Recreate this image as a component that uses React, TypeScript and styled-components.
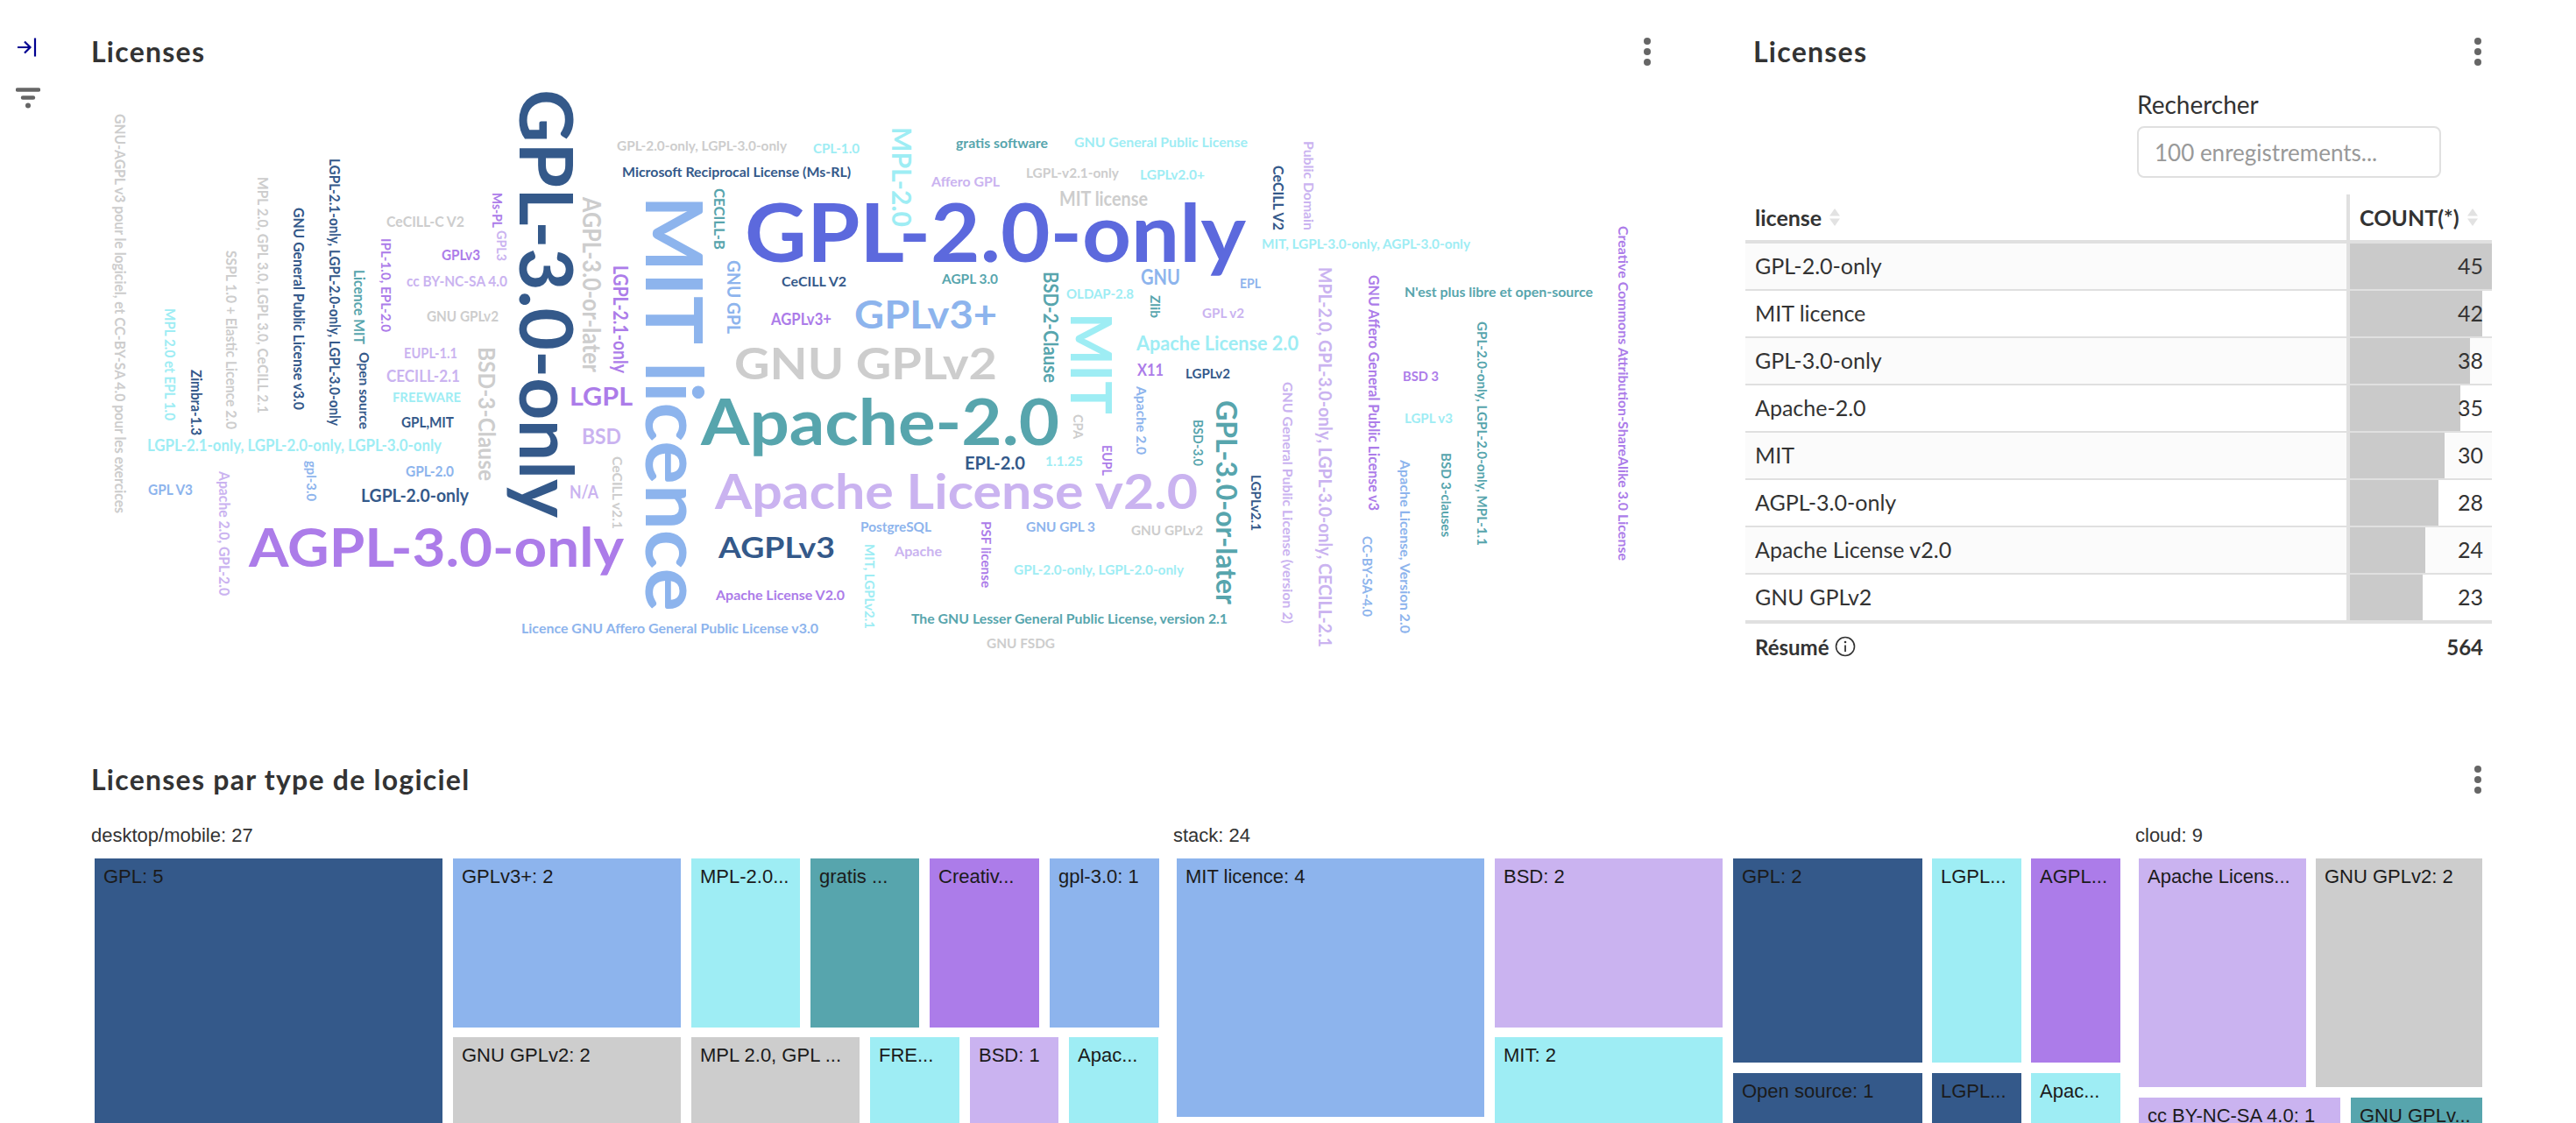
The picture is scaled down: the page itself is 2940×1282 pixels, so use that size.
import React from "react";
import styled, { createGlobalStyle } from "styled-components";

const C = {
  navy: "#34598a",
  blue: "#8db4ed",
  cyan: "#9eedf4",
  teal: "#57a5ad",
  purple: "#ac7ce9",
  lav: "#cab3f0",
  gray: "#cdcdcd",
  indigo: "#5c69dd",
};
type ColorKey = keyof typeof C;

const UI_FONT = `"Lato", "Noto Sans", sans-serif`;

const Global = createGlobalStyle`
  html, body { margin: 0; padding: 0; background: #fff; }
  body { font-family: ${UI_FONT}; color: #333; }
`;

const Page = styled.div`
  width: 2940px;
  height: 1282px;
  display: flex;
  overflow: hidden;
  background: #fff;
`;
const Rail = styled.aside`
  width: 106px;
  flex: none;
  display: flex;
  flex-direction: column;
  align-items: flex-start;
  padding: 42px 0 0 18px;
  gap: 34px;
  box-sizing: border-box;
`;
const Main = styled.main`
  width: 2738px;
  flex: none;
  display: flex;
  flex-direction: column;
`;
const TopRow = styled.div`
  height: 861px;
  flex: none;
  padding-top: 30px;
  box-sizing: border-box;
  display: flex;
`;
const Panel = styled.section<{ $w: number }>`
  width: ${(p) => p.$w}px;
  flex: none;
  display: flex;
  flex-direction: column;
`;
const Header = styled.header<{ $pl?: number; $pr: number }>`
  height: 58px;
  flex: none;
  display: flex;
  align-items: center;
  justify-content: space-between;
  padding: 0 ${(p) => p.$pr}px 0 ${(p) => p.$pl ?? 0}px;
`;
const Title = styled.h2`
  margin: 0 0 2px -2px;
  font-size: 32px;
  font-weight: 700;
  color: #333;
  letter-spacing: 1.25px;
`;
const CloudSvg = styled.svg`
  display: block;
  width: 1886px;
  height: 670px;
  margin-top: 12px;
`;
const Word = styled.text`
  font-family: ${UI_FONT};
  font-weight: 700;
`;

const SearchRow = styled.div`
  display: flex;
  justify-content: flex-end;
  padding-right: 58px;
  margin-top: 14px;
`;
const SearchBox = styled.label`
  width: 347px;
  display: flex;
  flex-direction: column;
  gap: 8px;
`;
const SearchLabel = styled.span`
  font-size: 28px;
  line-height: 34px;
  color: #333;
`;
const SearchInput = styled.input`
  height: 59px;
  box-sizing: border-box;
  border: 2px solid #e0e0e0;
  border-radius: 8px;
  padding: 0 18px;
  font-family: ${UI_FONT};
  font-size: 26px;
  outline: none;
  &::placeholder { color: #999; opacity: 1; }
`;

const Table = styled.div`
  margin-top: 19px;
  width: 852px;
  display: flex;
  flex-direction: column;
`;
const HeadRow = styled.div`
  display: grid;
  grid-template-columns: 686px 166px;
  height: 56px;
  box-sizing: border-box;
  border-bottom: 4px solid #e0e0e0;
`;
const HeadCell = styled.div<{ $divider?: boolean }>`
  display: flex;
  align-items: flex-end;
  gap: 9px;
  padding: 0 0 10px 11px;
  font-size: 25px;
  font-weight: 700;
  color: #333;
  line-height: 32px;
  ${(p) => (p.$divider ? "border-left: 4px solid #e0e0e0;" : "")}
`;
const SortIcon = styled.svg`
  width: 12px;
  height: 20px;
  flex: none;
  margin-bottom: 6px;
`;
const Row = styled.div<{ $odd: boolean; $last: boolean }>`
  display: grid;
  grid-template-columns: 686px 166px;
  height: ${(p) => (p.$last ? 56 : 54)}px;
  box-sizing: border-box;
  border-bottom: ${(p) => (p.$last ? 4 : 2)}px solid #e0e0e0;
  background: ${(p) => (p.$odd ? "#fbfbfb" : "#fff")};
`;
const NameCell = styled.div`
  display: flex;
  align-items: center;
  padding: 0 0 3px 11px;
  font-size: 25px;
  color: #333;
`;
const ValueCell = styled.div`
  position: relative;
  border-left: 4px solid #e0e0e0;
  display: flex;
  align-items: center;
  justify-content: flex-end;
  padding: 0 10px 3px 0;
  font-size: 25px;
  color: #333;
`;
const Bar = styled.div`
  position: absolute;
  left: 0;
  top: 0;
  bottom: 0;
  background: #cacaca;
`;
const ValueText = styled.span`
  position: relative;
`;
const FootRow = styled.div`
  display: flex;
  align-items: center;
  justify-content: space-between;
  height: 52px;
  padding: 0 10px 0 11px;
  font-size: 24px;
  font-weight: 700;
  color: #333;
`;
const FootLabel = styled.span`
  display: flex;
  align-items: center;
  gap: 7px;
`;

const BottomPanel = styled.section`
  display: flex;
  flex-direction: column;
  flex: none;
`;
const Groups = styled.div`
  display: flex;
  gap: 20px;
  margin: 19px 0 0 2px;
`;
const Group = styled.div<{ $w: number }>`
  width: ${(p) => p.$w}px;
  flex: none;
  display: flex;
  flex-direction: column;
  gap: 10px;
`;
const Caption = styled.div`
  margin-left: -4px;
  font-family: "Liberation Sans", Arial, sans-serif;
  font-size: 22px;
  line-height: 32px;
  color: #333;
`;
const Cluster = styled.div<{ $col?: boolean; $gap?: number }>`
  display: flex;
  flex-direction: ${(p) => (p.$col ? "column" : "row")};
  gap: ${(p) => p.$gap ?? 12}px;
  align-items: flex-start;
`;
const Tile = styled.div<{ $w: number; $h: number; $c: ColorKey }>`
  width: ${(p) => p.$w}px;
  height: ${(p) => p.$h}px;
  flex: none;
  background: ${(p) => C[p.$c]};
  box-sizing: border-box;
  padding: 8px 8px 0 10px;
  font-family: "Liberation Sans", Arial, sans-serif;
  font-size: 22px;
  line-height: 26px;
  color: #1b1b1b;
  white-space: nowrap;
  overflow: hidden;
`;

type HW = [string, number, number, number, number, ColorKey];

const horizontal: HW[] = [
  ["CeCILL-C V2", 441, 530, 259, 17, "gray"],
  ["GPLv3", 504, 548, 297, 17, "purple"],
  ["cc BY-NC-SA 4.0", 464, 579, 327, 17, "lav"],
  ["GNU GPLv2", 487, 569, 367, 17, "gray"],
  ["EUPL-1.1", 461, 522, 409, 17, "lav"],
  ["CECILL-2.1", 441, 525, 436, 18, "lav"],
  ["FREEWARE", 448, 526, 459, 16, "cyan"],
  ["GPL,MIT", 458, 518, 488, 17, "navy"],
  ["LGPL-2.1-only, LGPL-2.0-only, LGPL-3.0-only", 168, 504, 515, 18, "cyan"],
  ["GPL-2.0", 463, 518, 544, 17, "blue"],
  ["GPL V3", 169, 220, 565, 17, "blue"],
  ["LGPL-2.0-only", 412, 535, 573, 21, "navy"],
  ["AGPL-3.0-only", 284, 712, 647, 62, "purple"],
  ["LGPL", 650, 722, 463, 29, "purple"],
  ["BSD", 664, 709, 507, 24, "lav"],
  ["N/A", 650, 683, 569, 20, "lav"],
  ["GPL-2.0-only, LGPL-3.0-only", 704, 898, 172, 16, "gray"],
  ["CPL-1.0", 928, 981, 175, 16, "cyan"],
  ["gratis software", 1091, 1196, 169, 16, "teal"],
  ["GNU General Public License", 1226, 1424, 168, 16, "cyan"],
  ["Microsoft Reciprocal License (Ms-RL)", 710, 971, 202, 16, "navy"],
  ["Affero GPL", 1063, 1141, 213, 16, "lav"],
  ["LGPL-v2.1-only", 1171, 1277, 203, 16, "gray"],
  ["LGPLv2.0+", 1301, 1375, 205, 16, "cyan"],
  ["MIT license", 1209, 1310, 235, 22, "gray"],
  ["GPL-2.0-only", 850, 1422, 299, 91, "indigo"],
  ["CeCILL V2", 892, 966, 327, 16, "navy"],
  ["AGPL 3.0", 1075, 1139, 324, 16, "teal"],
  ["GNU", 1302, 1347, 325, 24, "blue"],
  ["OLDAP-2.8", 1217, 1294, 341, 16, "cyan"],
  ["AGPLv3+", 880, 949, 371, 18, "purple"],
  ["GPLv3+", 975, 1138, 375, 44, "blue"],
  ["GNU GPLv2", 838, 1138, 433, 50, "gray"],
  ["Apache License 2.0", 1297, 1482, 400, 23, "cyan"],
  ["X11", 1298, 1328, 429, 18, "purple"],
  ["LGPLv2", 1353, 1404, 432, 16, "navy"],
  ["EPL", 1415, 1439, 329, 15, "blue"],
  ["GPL v2", 1372, 1420, 363, 15, "lav"],
  ["MIT, LGPL-3.0-only, AGPL-3.0-only", 1440, 1678, 284, 16, "cyan"],
  ["N'est plus libre et open-source", 1603, 1818, 339, 16, "teal"],
  ["BSD 3", 1601, 1642, 435, 15, "purple"],
  ["LGPL v3", 1603, 1658, 483, 15, "cyan"],
  ["Apache-2.0", 800, 1209, 508, 73, "teal"],
  ["EPL-2.0", 1101, 1170, 536, 20, "navy"],
  ["1.1.25", 1193, 1236, 532, 16, "cyan"],
  ["Apache License v2.0", 816, 1367, 581, 55, "lav"],
  ["PostgreSQL", 982, 1063, 607, 16, "blue"],
  ["GNU GPL 3", 1171, 1250, 607, 16, "blue"],
  ["GNU GPLv2", 1291, 1373, 611, 16, "gray"],
  ["AGPLv3", 820, 953, 637, 33, "navy"],
  ["Apache", 1021, 1075, 635, 16, "lav"],
  ["GPL-2.0-only, LGPL-2.0-only", 1157, 1351, 656, 16, "cyan"],
  ["Apache License V2.0", 817, 964, 685, 16, "purple"],
  ["Licence GNU Affero General Public License v3.0", 595, 934, 723, 16, "blue"],
  ["The GNU Lesser General Public License, version 2.1", 1040, 1401, 712, 16, "teal"],
  ["GNU FSDG", 1126, 1204, 740, 16, "gray"],
];

const vertical: HW[] = [
  ["GNU-AGPL v3 pour le logiciel, et CC-BY-SA 4.0 pour les exercices", 130, 586, 131, 17, "gray"],
  ["MPL 2.0 et EPL 1.0", 352, 480, 188, 17, "cyan"],
  ["Zimbra-1.3", 422, 497, 218, 17, "navy"],
  ["SSPL 1.0 + Elastic Licence 2.0", 286, 490, 258, 17, "gray"],
  ["MPL 2.0, GPL 3.0, LGPL 3.0, CeCILL 2.1", 202, 472, 294, 17, "gray"],
  ["GNU General Public License v3.0", 237, 468, 335, 17, "navy"],
  ["LGPL-2.1-only, LGPL-2.0-only, LGPL-3.0-only", 181, 486, 376, 17, "navy"],
  ["Licence MIT", 308, 393, 404, 17, "teal"],
  ["Open source", 402, 490, 410, 16, "navy"],
  ["IPL-1.0, EPL-2.0", 272, 379, 435, 16, "purple"],
  ["Ms-PL", 220, 260, 562, 16, "purple"],
  ["GPL3", 263, 298, 567, 16, "lav"],
  ["GPL-3.0-only", 102, 591, 593, 84, "navy"],
  ["AGPL-3.0-or-later", 225, 425, 665, 28, "gray"],
  ["BSD-3-Clause", 396, 549, 546, 26, "gray"],
  ["LGPL-2.1-only", 303, 426, 700, 22, "purple"],
  ["MIT licence", 223, 698, 737, 90, "blue"],
  ["CECILL-B", 215, 285, 815, 17, "teal"],
  ["GNU GPL", 297, 381, 830, 20, "blue"],
  ["MPL-2.0", 145, 259, 1018, 31, "cyan"],
  ["BSD-2-Clause", 310, 437, 1191, 22, "teal"],
  ["MIT", 357, 473, 1222, 65, "cyan"],
  ["Zlib", 337, 363, 1313, 16, "teal"],
  ["CeCILL v2.1", 521, 604, 699, 16, "gray"],
  ["CPA", 473, 501, 1225, 15, "gray"],
  ["EUPL", 508, 543, 1258, 15, "purple"],
  ["Apache 2.0", 441, 519, 1297, 16, "blue"],
  ["BSD-3.0", 479, 532, 1362, 15, "teal"],
  ["MIT, LGPLv2.1", 621, 718, 987, 16, "cyan"],
  ["PSF license", 595, 671, 1120, 15, "purple"],
  ["gpl-3.0", 526, 572, 350, 16, "blue"],
  ["Apache 2.0, GPL-2.0", 538, 680, 250, 17, "lav"],
  ["CeCILL V2", 189, 263, 1453, 17, "navy"],
  ["Public Domain", 161, 263, 1488, 16, "lav"],
  ["MPL-2.0, GPL-3.0-only, LGPL-3.0-only, CECILL-2.1", 305, 739, 1505, 21, "lav"],
  ["GNU Affero General Public License v3", 314, 583, 1562, 17, "purple"],
  ["GPL-2.0-only, LGPL-2.0-only, MPL-1.1", 367, 623, 1686, 16, "teal"],
  ["Creative Commons Attribution-ShareAlike 3.0 License", 258, 640, 1847, 16, "purple"],
  ["GPL-3.0-or-later", 457, 690, 1388, 33, "teal"],
  ["LGPLv2.1", 542, 606, 1428, 16, "navy"],
  ["GNU General Public License (version 2)", 436, 712, 1464, 16, "lav"],
  ["CC-BY-SA-4.0", 612, 704, 1555, 16, "blue"],
  ["Apache License, Version 2.0", 525, 723, 1598, 16, "blue"],
  ["BSD 3-clauses", 517, 613, 1645, 16, "teal"],
];

const rows: [string, number][] = [
  ["GPL-2.0-only", 45],
  ["MIT licence", 42],
  ["GPL-3.0-only", 38],
  ["Apache-2.0", 35],
  ["MIT", 30],
  ["AGPL-3.0-only", 28],
  ["Apache License v2.0", 24],
  ["GNU GPLv2", 23],
];

const Kebab = () => (
  <svg width="10" height="32" viewBox="0 0 10 32" aria-hidden="true">
    <circle cx="5" cy="4" r="4" fill="#666" />
    <circle cx="5" cy="16" r="4" fill="#666" />
    <circle cx="5" cy="28" r="4" fill="#666" />
  </svg>
);

const Sort = () => (
  <SortIcon viewBox="0 0 12 20" aria-hidden="true">
    <path d="M6 0 L12 8.5 H0 Z" fill="#e2e2e2" />
    <path d="M6 20 L12 11.5 H0 Z" fill="#e2e2e2" />
  </SortIcon>
);

export default function App() {
  return (
    <>
      <Global />
      <Page>
        <Rail>
          <svg width="24" height="24" viewBox="0 0 24 24" aria-hidden="true">
            <path d="M2 12 H16 M10 5.5 L16.5 12 L10 18.5 M22 1.5 V22.5" fill="none" stroke="#000091" strokeWidth="2.2" />
          </svg>
          <svg width="28" height="24" viewBox="0 0 28 24" aria-hidden="true">
            <path d="M2 2.5 H26 M8 11.5 H20" stroke="#666" strokeWidth="4.4" strokeLinecap="round" />
            <circle cx="14" cy="20.5" r="3" fill="#666" />
          </svg>
        </Rail>
        <Main>
          <TopRow>
            <Panel $w={1886}>
              <Header $pr={107}>
                <Title>Licenses</Title>
                <Kebab />
              </Header>
              <CloudSvg viewBox="106 100 1886 670">
                {horizontal.map(([t, x0, x1, y, s, c], i) => (
                  <Word key={`h${i}`} x={x0} y={y} fontSize={s} fill={C[c]} textLength={x1 - x0} lengthAdjust="spacingAndGlyphs">
                    {t}
                  </Word>
                ))}
                {vertical.map(([t, y0, y1, x, s, c], i) => (
                  <Word key={`v${i}`} x={x} y={y0} fontSize={s} fill={C[c]} transform={`rotate(90 ${x} ${y0})`} textLength={y1 - y0} lengthAdjust="spacingAndGlyphs">
                    {t}
                  </Word>
                ))}
              </CloudSvg>
            </Panel>
            <Panel $w={852}>
              <Header $pl={11} $pr={11}>
                <Title>Licenses</Title>
                <Kebab />
              </Header>
              <SearchRow>
                <SearchBox>
                  <SearchLabel>Rechercher</SearchLabel>
                  <SearchInput placeholder="100 enregistrements..." />
                </SearchBox>
              </SearchRow>
              <Table>
                <HeadRow>
                  <HeadCell>license <Sort /></HeadCell>
                  <HeadCell $divider>COUNT(*) <Sort /></HeadCell>
                </HeadRow>
                {rows.map(([name, v], i) => (
                  <Row key={name} $odd={i % 2 === 0} $last={i === rows.length - 1}>
                    <NameCell>{name}</NameCell>
                    <ValueCell>
                      <Bar style={{ width: `${(v / 45) * 162}px` }} />
                      <ValueText>{v}</ValueText>
                    </ValueCell>
                  </Row>
                ))}
                <FootRow>
                  <FootLabel>
                    Résumé
                    <svg width="24" height="24" viewBox="0 0 24 24" aria-hidden="true">
                      <circle cx="12" cy="12" r="10.5" fill="none" stroke="#333" strokeWidth="1.6" />
                      <path d="M12 10.5 V18" stroke="#333" strokeWidth="1.8" />
                      <circle cx="12" cy="7" r="1.3" fill="#333" />
                    </svg>
                  </FootLabel>
                  <span>564</span>
                </FootRow>
              </Table>
            </Panel>
          </TopRow>
          <BottomPanel>
            <Header $pr={11}>
              <Title>Licenses par type de logiciel</Title>
              <Kebab />
            </Header>
            <Groups>
              <Group $w={1215}>
                <Caption>desktop/mobile: 27</Caption>
                <Cluster>
                  <Tile $w={397} $h={320} $c="navy">GPL: 5</Tile>
                  <Cluster $col $gap={11}>
                    <Cluster>
                      <Tile $w={260} $h={193} $c="blue">GPLv3+: 2</Tile>
                      <Tile $w={124} $h={193} $c="cyan">MPL-2.0...</Tile>
                      <Tile $w={124} $h={193} $c="teal">gratis ...</Tile>
                      <Tile $w={125} $h={193} $c="purple">Creativ...</Tile>
                      <Tile $w={125} $h={193} $c="blue">gpl-3.0: 1</Tile>
                    </Cluster>
                    <Cluster>
                      <Tile $w={260} $h={120} $c="gray">GNU GPLv2: 2</Tile>
                      <Tile $w={192} $h={120} $c="gray">MPL 2.0, GPL ...</Tile>
                      <Tile $w={102} $h={120} $c="cyan">FRE...</Tile>
                      <Tile $w={101} $h={120} $c="lav">BSD: 1</Tile>
                      <Tile $w={102} $h={120} $c="cyan">Apac...</Tile>
                    </Cluster>
                  </Cluster>
                </Cluster>
              </Group>
              <Group $w={1078}>
                <Caption>stack: 24</Caption>
                <Cluster>
                  <Tile $w={351} $h={295} $c="blue">MIT licence: 4</Tile>
                  <Cluster $col $gap={11}>
                    <Tile $w={260} $h={193} $c="lav">BSD: 2</Tile>
                    <Tile $w={260} $h={120} $c="cyan">MIT: 2</Tile>
                  </Cluster>
                  <Cluster $col>
                    <Cluster $gap={11}>
                      <Tile $w={216} $h={233} $c="navy">GPL: 2</Tile>
                      <Tile $w={102} $h={233} $c="cyan">LGPL...</Tile>
                      <Tile $w={102} $h={233} $c="purple">AGPL...</Tile>
                    </Cluster>
                    <Cluster $gap={11}>
                      <Tile $w={216} $h={80} $c="navy">Open source: 1</Tile>
                      <Tile $w={102} $h={80} $c="navy">LGPL...</Tile>
                      <Tile $w={102} $h={80} $c="cyan">Apac...</Tile>
                    </Cluster>
                  </Cluster>
                </Cluster>
              </Group>
              <Group $w={392}>
                <Caption>cloud: 9</Caption>
                <Cluster $col>
                  <Cluster $gap={11}>
                    <Tile $w={191} $h={261} $c="lav">Apache Licens...</Tile>
                    <Tile $w={190} $h={261} $c="gray">GNU GPLv2: 2</Tile>
                  </Cluster>
                  <Cluster>
                    <Tile $w={230} $h={60} $c="lav">cc BY-NC-SA 4.0: 1</Tile>
                    <Tile $w={150} $h={60} $c="teal">GNU GPLv...</Tile>
                  </Cluster>
                </Cluster>
              </Group>
            </Groups>
          </BottomPanel>
        </Main>
      </Page>
    </>
  );
}
